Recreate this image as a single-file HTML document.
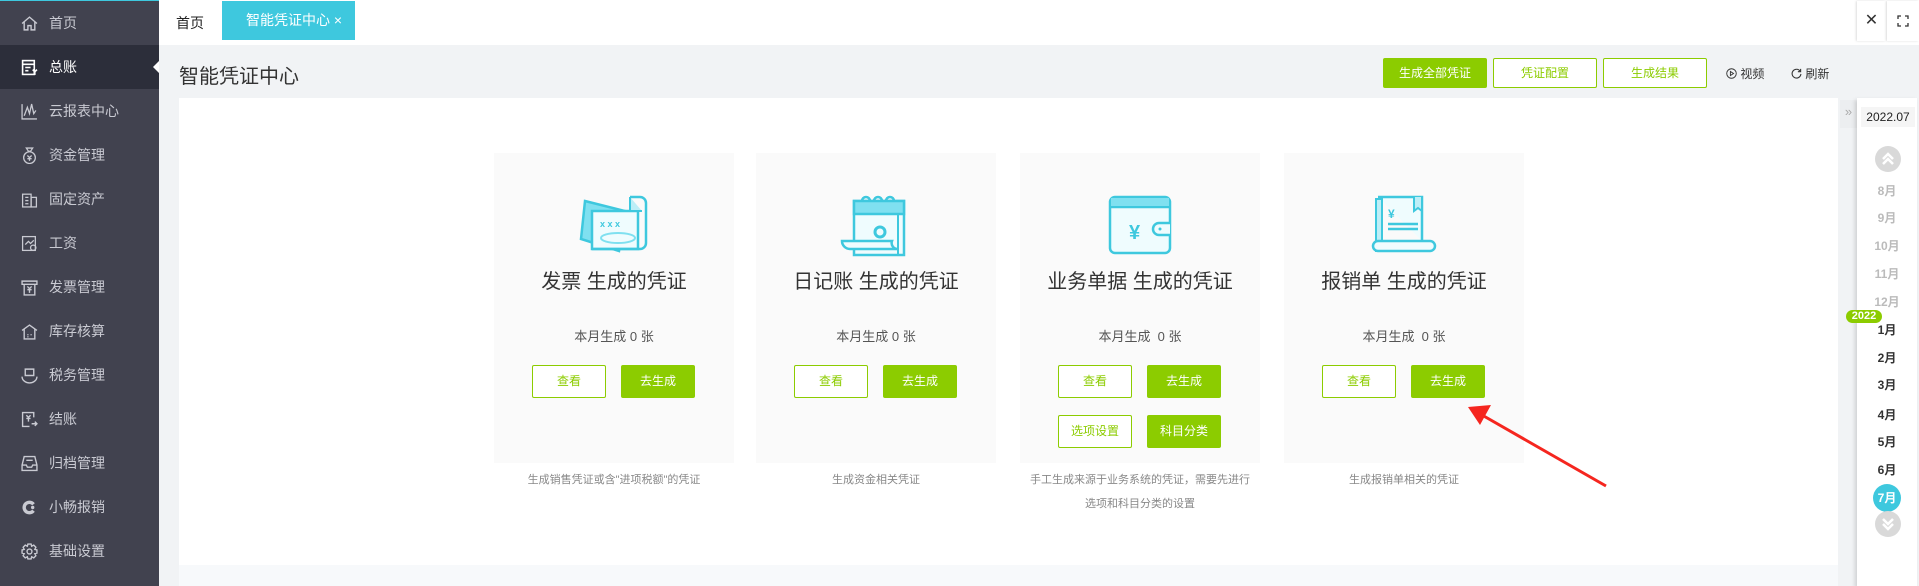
<!DOCTYPE html>
<html><head><meta charset="utf-8">
<style>
*{margin:0;padding:0;box-sizing:border-box}
body{width:1919px;height:586px;overflow:hidden;font-family:"Liberation Sans","Noto Sans CJK SC",sans-serif;background:#f1f3f5;position:relative}
.sb{position:absolute;left:0;top:0;width:159px;height:586px;background:#41424f;border-top:1px solid #3ec8de}
.it{position:absolute;left:0;width:159px;height:44px;display:flex;align-items:center;color:#c9cad2;font-size:14px}
.it svg{position:absolute;left:21px;width:17px;height:17px}
.it span{position:absolute;left:49px}
.it.act{background:#2c2e3a;color:#fff}
.it.act:after{content:"";position:absolute;right:0;top:16px;border:6px solid transparent;border-right-color:#fff}
.top{position:absolute;left:159px;top:0;width:1760px;height:45px;background:#fff}
.tab1{position:absolute;left:17px;top:13px;font-size:14px;color:#222}
.tab2{position:absolute;left:222px;top:1px;width:133px;height:39px;background:#3ec8de;color:#fff;font-size:14px;line-height:39px;padding-left:24px}
.tbtn{position:absolute;top:1px;height:40px;width:29px;background:#fff;box-shadow:-1px 0 2px #ddd;color:#333;font-size:16px;text-align:center;line-height:40px}
.title{position:absolute;left:179px;top:60px;font-size:20px;color:#333}
.hb{position:absolute;top:58px;height:30px;width:104px;border:1px solid #8ccc00;color:#8ccc00;font-size:12px;text-align:center;line-height:28px;border-radius:2px;background:#fff}
.hb.g{background:#8ccc00;color:#fff}
.hl{position:absolute;top:65px;font-size:12px;color:#333}
.panel{position:absolute;left:179px;top:98px;width:1659px;height:467px;background:#fff}
.strip{position:absolute;left:179px;top:565px;width:1659px;height:21px;background:#f7f9fb}
.card{position:absolute;top:153px;width:240px;height:310px;background:#fafafa;text-align:center}
.card svg{position:absolute;left:84px;top:40px;width:72px;height:64px}
.ct{position:absolute;left:0;width:100%;top:112px;font-size:20px;color:#333}
.cn{position:absolute;left:0;width:100%;top:173px;font-size:13px;color:#555}
.b{position:absolute;width:74px;height:33px;border:1px solid #8ccc00;border-radius:2px;font-size:12px;line-height:31px;color:#8ccc00;background:#fff}
.b.g{background:#8ccc00;color:#fff}
.desc{position:absolute;width:240px;text-align:center;font-size:11px;color:#888;line-height:24px;top:468px}
.tog{position:absolute;left:1840px;top:100px;width:17px;height:28px;background:#eceef0;color:#aaa;font-size:13px;text-align:center;line-height:24px}
.cal{position:absolute;left:1857px;top:98px;width:60px;height:488px;background:#fff;box-shadow:-2px 2px 4px rgba(0,0,0,.15)}
.cy{position:absolute;left:4px;top:9px;width:54px;height:20px;background:#f5f5f5;font-size:12px;color:#222;text-align:center;line-height:20px}
.m{position:absolute;left:0;width:60px;text-align:center;font-size:12px;font-weight:bold;color:#333}
.m.f{color:#bbb}
.circ{position:absolute;left:18px;width:26px;height:26px;border-radius:50%;background:#d9d9d9}
</style></head><body>
<div class="sb">
<div class="it" style="top:0"><svg viewBox="0 0 16 16" fill="none" stroke="#c9cad2" stroke-width="1.3"><path d="M1 8L8 2l7 6M3 6.5V14h3.5v-4h3v4H13V6.5"/></svg><span>首页</span></div>
<div class="it act" style="top:44px"><svg viewBox="0 0 16 16" fill="none" stroke="#fff" stroke-width="1.5"><rect x="1.5" y="1.5" width="11" height="13"/><path d="M1.5 5h11M4 8h5M4 11h3M11 10l2 2 2-2M13 12v3"/></svg><span>总账</span></div>
<div class="it" style="top:88px"><svg viewBox="0 0 16 16" fill="none" stroke="#c9cad2" stroke-width="1.2"><path d="M1 1v14h14M3 12l3-8 2 6 2-9 2 9 2-3"/></svg><span>云报表中心</span></div>
<div class="it" style="top:132px"><svg viewBox="0 0 16 16" fill="none" stroke="#c9cad2" stroke-width="1.2"><path d="M5 1h6l-2 3H7z"/><circle cx="8" cy="10" r="5.5"/><path d="M6 8l2 2 2-2M8 10v3M6 11h4"/></svg><span>资金管理</span></div>
<div class="it" style="top:176px"><svg viewBox="0 0 16 16" fill="none" stroke="#c9cad2" stroke-width="1.2"><rect x="1.5" y="3" width="8" height="12"/><rect x="9.5" y="6" width="5" height="9"/><path d="M4 6h3M4 9h3M4 12h3"/></svg><span>固定资产</span></div>
<div class="it" style="top:220px"><svg viewBox="0 0 16 16" fill="none" stroke="#c9cad2" stroke-width="1.2"><rect x="1.5" y="1.5" width="12" height="13"/><path d="M4 9l3-3 2 2 3-3"/><circle cx="11.5" cy="12" r="2.5"/></svg><span>工资</span></div>
<div class="it" style="top:264px"><svg viewBox="0 0 16 16" fill="none" stroke="#c9cad2" stroke-width="1.3"><path d="M1 2h14v3H1zM3 5v10h10V5M6 7l2 2 2-2M8 9v4M6 10h4"/></svg><span>发票管理</span></div>
<div class="it" style="top:308px"><svg viewBox="0 0 16 16" fill="none" stroke="#c9cad2" stroke-width="1.3"><path d="M1 7l7-5 7 5M3 6v9h10V6M6 11h1M9 11h1M6 13h1"/></svg><span>库存核算</span></div>
<div class="it" style="top:352px"><svg viewBox="0 0 16 16" fill="none" stroke="#c9cad2" stroke-width="1.3"><path d="M1 9a7 6 0 0 0 14 0M4 2h8v6H4z"/></svg><span>税务管理</span></div>
<div class="it" style="top:396px"><svg viewBox="0 0 16 16" fill="none" stroke="#c9cad2" stroke-width="1.3"><path d="M12 6V1.5H1.5v13H8"/><path d="M5 4l2 2 2-2M7 6v4M5 7h4M10 12h5M13 10l2 2-2 2"/></svg><span>结账</span></div>
<div class="it" style="top:440px"><svg viewBox="0 0 16 16" fill="none" stroke="#c9cad2" stroke-width="1.3"><path d="M3 1.5h10l2 8v5H1v-5zM1 9.5h4l1 2h4l1-2h4M5 5h6"/></svg><span>归档管理</span></div>
<div class="it" style="top:484px"><svg viewBox="0 0 16 16"><path d="M13 4A6.5 6.5 0 1 0 13 12L10.5 10A3.3 3.3 0 1 1 10.5 6Z" fill="#c9cad2"/><circle cx="11" cy="8" r="1.6" fill="#c9cad2"/></svg><span>小畅报销</span></div>
<div class="it" style="top:528px"><svg viewBox="0 0 16 16" fill="none" stroke="#c9cad2" stroke-width="1.3"><path d="M6.5 1h3l.5 2 2-1 2 2-1 2 2 .5v3l-2 .5 1 2-2 2-2-1-.5 2h-3l-.5-2-2 1-2-2 1-2-2-.5v-3l2-.5-1-2 2-2 2 1z"/><circle cx="8" cy="8" r="2.3"/></svg><span>基础设置</span></div>
</div>

<div class="top">
<div class="tab1">首页</div>
</div>
<div class="tab2">智能凭证中心 <span style="font-size:14px">×</span></div>
<div class="tbtn" style="left:1857px">✕</div>
<div class="tbtn" style="left:1887px;width:32px"><svg width="12" height="12" viewBox="0 0 12 12" fill="none" stroke="#333" stroke-width="1.3" style="margin-top:14px"><path d="M1 4V1h3M8 1h3v3M11 8v3H8M4 11H1V8"/></svg></div>

<div class="title">智能凭证中心</div>
<div class="hb g" style="left:1383px">生成全部凭证</div>
<div class="hb" style="left:1493px">凭证配置</div>
<div class="hb" style="left:1603px">生成结果</div>
<div class="hl" style="left:1726px"><svg width="11" height="11" viewBox="0 0 12 12" style="vertical-align:-1px" fill="none" stroke="#333"><circle cx="6" cy="6" r="5.2"/><path d="M4.8 3.8v4.4L8.2 6z"/></svg> 视频</div>
<div class="hl" style="left:1791px"><svg width="11" height="11" viewBox="0 0 12 12" style="vertical-align:-1px" fill="none" stroke="#333" stroke-width="1.2"><path d="M10 3.5A4.8 4.8 0 1 0 10.8 6.5"/><path d="M10.5 1v3h-3"/></svg> 刷新</div>

<div class="panel"></div>
<div class="strip"></div>

<div class="card" style="left:494px">
<svg viewBox="0 0 72 64"><g stroke="#3ec8de" stroke-width="2.5" fill="#7fe0f0"><path d="M7 8l40 10-6 40L3 46z"/></g><path d="M14 18h46v38H14z" fill="#effcfe" stroke="#3ec8de" stroke-width="2.5"/><path d="M52 4h10a6 6 0 0 1 6 6v40a6 6 0 0 1-6 6H14" fill="none" stroke="#3ec8de" stroke-width="2.5"/><path d="M52 4v14h12" fill="#bdeef7" stroke="#3ec8de" stroke-width="2"/><text x="22" y="34" font-size="9" fill="#3ec8de" font-family="Liberation Sans" font-weight="bold">x  x  x</text><ellipse cx="40" cy="45" rx="17" ry="5" fill="none" stroke="#7fe0f0" stroke-width="2"/></svg>
<div class="ct">发票 生成的凭证</div>
<div class="cn">本月生成 0 张</div>
<div class="b" style="left:38px;top:212px">查看</div>
<div class="b g" style="left:127px;top:212px">去生成</div>
</div>

<div class="card" style="left:756px">
<svg viewBox="0 0 72 64"><rect x="14" y="8" width="50" height="54" fill="#effcfe" stroke="#3ec8de" stroke-width="2.5"/><rect x="14" y="8" width="50" height="13" fill="#7fe0f0" stroke="#3ec8de" stroke-width="2.5"/><path d="M22 8a4 4 0 0 1 8 0M34 8a4 4 0 0 1 8 0M46 8a4 4 0 0 1 8 0" fill="none" stroke="#3ec8de" stroke-width="2.5"/><path d="M58 21v41" stroke="#3ec8de" stroke-width="2"/><circle cx="40" cy="39" r="5" fill="none" stroke="#3ec8de" stroke-width="3"/><path d="M2 48h50a6 6 0 0 0 6 8H10A8 8 0 0 1 2 48z" fill="#effcfe" stroke="#3ec8de" stroke-width="2.5"/></svg>
<div class="ct">日记账 生成的凭证</div>
<div class="cn">本月生成 0 张</div>
<div class="b" style="left:38px;top:212px">查看</div>
<div class="b g" style="left:127px;top:212px">去生成</div>
</div>

<div class="card" style="left:1020px">
<svg viewBox="0 0 72 64"><rect x="6" y="4" width="60" height="56" rx="5" fill="#effcfe" stroke="#3ec8de" stroke-width="2.5"/><path d="M6 14h60" stroke="#3ec8de" stroke-width="2.5"/><rect x="7" y="5" width="58" height="8" fill="#7fe0f0"/><text x="25" y="46" font-size="20" fill="#3ec8de" font-family="Liberation Sans" font-weight="bold">¥</text><path d="M66 30H55a6 6 0 0 0 0 12h11" fill="#effcfe" stroke="#3ec8de" stroke-width="2.5"/><circle cx="56" cy="36" r="1.5" fill="#3ec8de"/></svg>
<div class="ct">业务单据 生成的凭证</div>
<div class="cn">本月生成&nbsp; 0 张</div>
<div class="b" style="left:38px;top:212px">查看</div>
<div class="b g" style="left:127px;top:212px">去生成</div>
<div class="b" style="left:38px;top:262px">选项设置</div>
<div class="b g" style="left:127px;top:262px">科目分类</div>
</div>

<div class="card" style="left:1284px">
<svg viewBox="0 0 72 64"><path d="M10 4h44v44" fill="#effcfe" stroke="#3ec8de" stroke-width="2.5"/><path d="M14 6v52H8V6z" fill="#bdeef7" stroke="#3ec8de" stroke-width="2"/><path d="M46 4v14l4-3 4 3V4" fill="#bdeef7" stroke="#3ec8de" stroke-width="2"/><text x="20" y="25" font-size="12" fill="#3ec8de" font-family="Liberation Sans" font-weight="bold">¥</text><path d="M20 31h30M20 36h30" stroke="#3ec8de" stroke-width="2.5"/><path d="M10 48h52a5 5 0 0 1 0 10H10a5 5 0 0 1 0-10" fill="#effcfe" stroke="#3ec8de" stroke-width="2.5"/></svg>
<div class="ct">报销单 生成的凭证</div>
<div class="cn">本月生成&nbsp; 0 张</div>
<div class="b" style="left:38px;top:212px">查看</div>
<div class="b g" style="left:127px;top:212px">去生成</div>
</div>

<div class="desc" style="left:494px">生成销售凭证或含"进项税额"的凭证</div>
<div class="desc" style="left:756px">生成资金相关凭证</div>
<div class="desc" style="left:1020px">手工生成来源于业务系统的凭证，需要先进行<br>选项和科目分类的设置</div>
<div class="desc" style="left:1284px">生成报销单相关的凭证</div>

<svg style="position:absolute;left:0;top:0" width="1919" height="586"><path d="M1606 486L1482 415" stroke="#f5261f" stroke-width="3"/><path d="M1468 407L1491 405L1480 425Z" fill="#f5261f"/></svg>

<div class="tog">»</div>
<div class="cal">
<div class="cy">2022.07</div>
<div class="circ" style="top:48px"><svg width="26" height="26" viewBox="0 0 26 26" fill="none" stroke="#fff" stroke-width="2.5"><path d="M8 13l5-5 5 5M8 18l5-5 5 5"/></svg></div>
<div class="m f" style="top:84px">8月</div>
<div class="m f" style="top:111px">9月</div>
<div class="m f" style="top:139px">10月</div>
<div class="m f" style="top:167px">11月</div>
<div class="m f" style="top:195px">12月</div>
<div class="m" style="top:223px">1月</div>
<div class="m" style="top:251px">2月</div>
<div class="m" style="top:278px">3月</div>
<div class="m" style="top:308px">4月</div>
<div class="m" style="top:335px">5月</div>
<div class="m" style="top:363px">6月</div>
<div style="position:absolute;left:16px;top:386px;width:28px;height:28px;border-radius:50%;background:#3ec8de;color:#fff;font-size:12px;font-weight:bold;text-align:center;line-height:28px">7月</div>
<div class="circ" style="top:413px"><svg width="26" height="26" viewBox="0 0 26 26" fill="none" stroke="#fff" stroke-width="2.5"><path d="M8 8l5 5 5-5M8 13l5 5 5-5"/></svg></div>
</div>
<div style="position:absolute;left:1846px;top:310px;width:36px;height:13px;border-radius:7px;background:#8ccc00;color:#fff;font-size:11px;font-weight:bold;text-align:center;line-height:13px">2022</div>
</body></html>
